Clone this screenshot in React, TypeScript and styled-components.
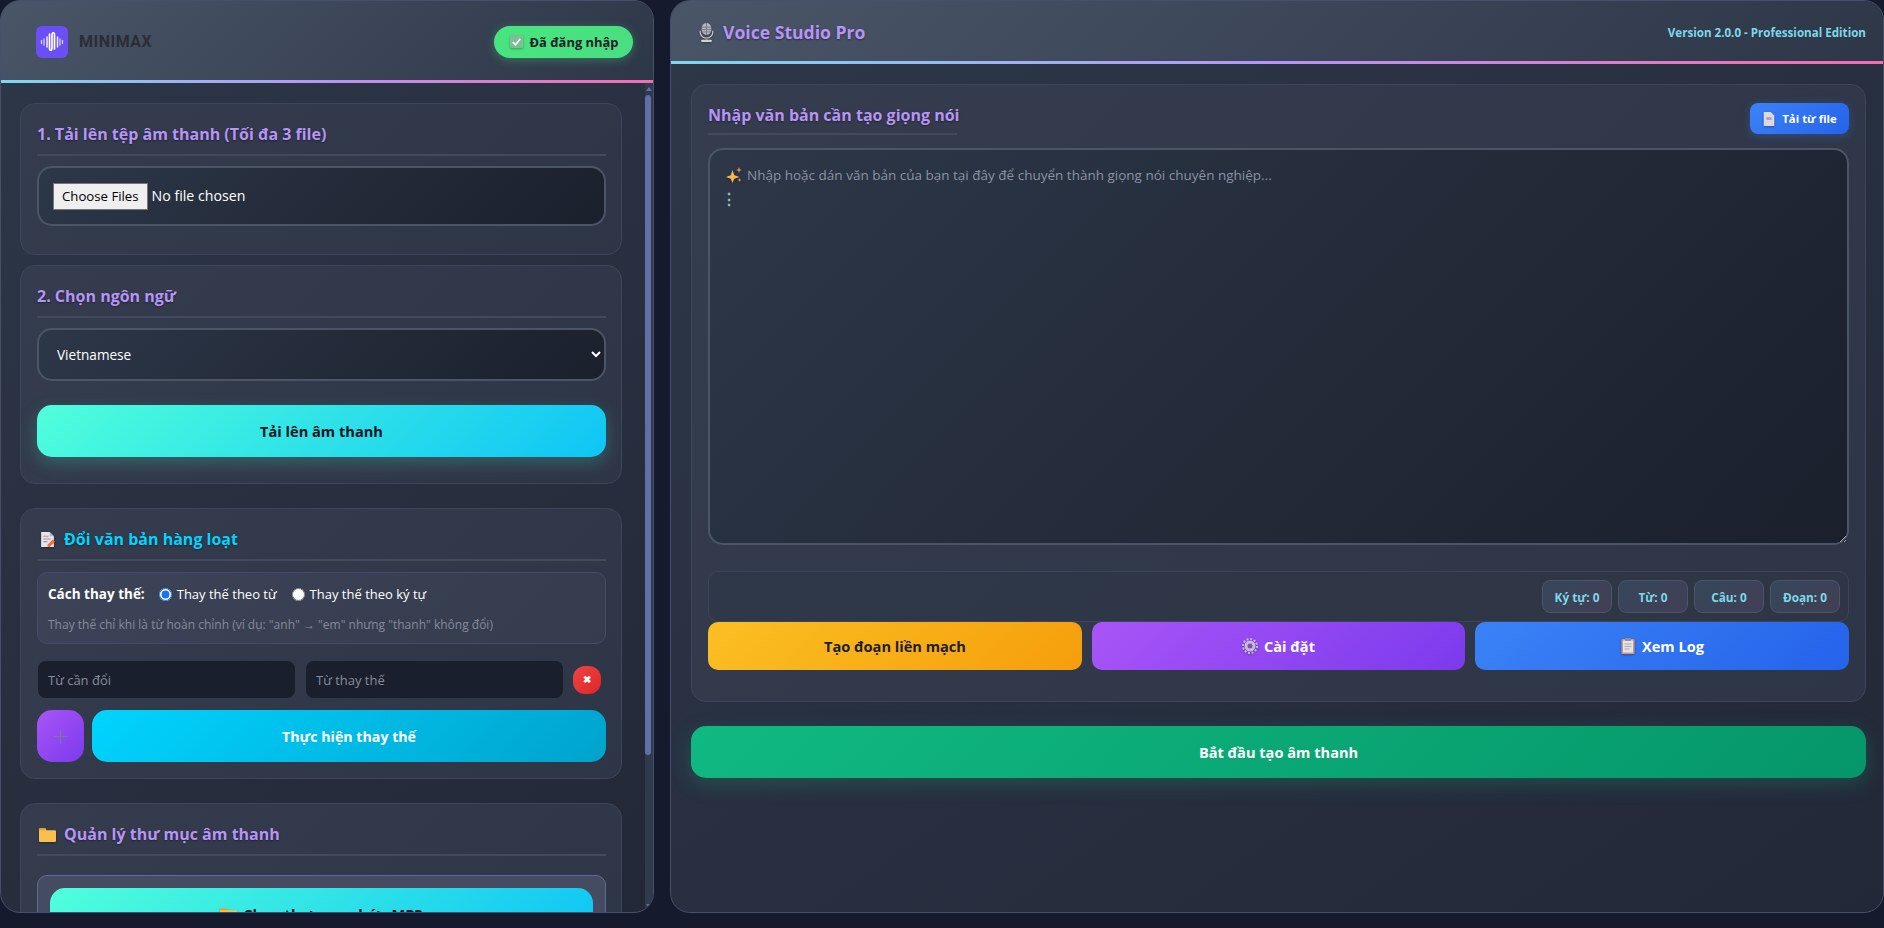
import React from "react";
import styled, { createGlobalStyle, css } from "styled-components";

const Global = createGlobalStyle`
  * { box-sizing: border-box; }
  html, body { margin: 0; height: 100%; overflow: hidden; }
  body { background: #151a2c; font-family: "Open Sans", "Noto Sans", sans-serif; color: #fff; }
`;

const Page = styled.div`
  display: grid;
  grid-template-columns: 654px 1214px;
  column-gap: 16px;
  height: 913px;
`;

const Panel = styled.section`
  display: flex;
  flex-direction: column;
  min-height: 0;
  overflow: hidden;
  border-radius: 20px;
  border: 1px solid #46506a;
  background: linear-gradient(145deg, #2d3748, #232838);
`;

const Header = styled.header<{ $h: number; $pl: number; $pr: number }>`
  flex: none;
  height: ${(p) => p.$h}px;
  padding: 2px ${(p) => p.$pr}px 0 ${(p) => p.$pl}px;
  display: flex;
  align-items: center;
  justify-content: space-between;
  background: linear-gradient(135deg, #4a5568, #2d3748);
  border-bottom: 3px solid;
  border-image: linear-gradient(90deg, #7dd8ef, #b794f6, #f56cb0) 1;
`;

const Brand = styled.div`
  display: flex;
  align-items: center;
  gap: 11px;
`;

const BrandName = styled.span`
  font: 700 16px "Roboto", sans-serif;
  color: #2a2d33;
  letter-spacing: 0.5px;
`;

const LoginBadge = styled.div`
  height: 32px;
  width: 139px;
  border-radius: 16px;
  display: flex;
  align-items: center;
  justify-content: center;
  gap: 6px;
  font-size: 12.9px;
  font-weight: 700;
  color: #1a202c;
  background: linear-gradient(135deg, #48e57f, #4ade80);
  box-shadow: 0 2px 10px rgba(74, 222, 128, 0.35);
`;

const ScrollArea = styled.div`
  position: relative;
  flex: 1;
  min-height: 0;
  overflow: hidden;
  padding: 20px 31px 0 19px;
  display: flex;
  flex-direction: column;
`;

const Track = styled.div`
  position: absolute;
  right: 0;
  top: 0;
  bottom: 0;
  width: 8px;
  background: #313a4d;
  &::before,
  &::after {
    content: "";
    position: absolute;
    left: 1px;
    border-left: 3px solid transparent;
    border-right: 3px solid transparent;
  }
  &::before {
    top: 4px;
    border-bottom: 4px solid #5f6fa8;
  }
  &::after {
    bottom: 4px;
    border-top: 4px solid #5f6fa8;
  }
`;

const Thumb = styled.div`
  position: absolute;
  left: 0;
  right: 2px;
  top: 12px;
  height: 660px;
  border-radius: 3px;
  background: #5f6fa8;
`;

const Card = styled.div<{ $mb: number; $h: number }>`
  flex: none;
  height: ${(p) => p.$h}px;
  margin-bottom: ${(p) => p.$mb}px;
  padding: 0 15px 0 16px;
  border: 1px solid #3d465e;
  border-radius: 15px;
  background: linear-gradient(135deg, #343c4d, #2e3546);
`;

const CardTitle = styled.h3<{ $cyan?: boolean }>`
  margin: 0 0 10px;
  height: 52px;
  padding-top: 10px;
  display: flex;
  align-items: center;
  gap: 8px;
  border-bottom: 2px solid #434a5d;
  font-size: 16px;
  font-weight: 700;
  color: ${(p) => (p.$cyan ? "#00d4ff" : "#b794f6")};
  text-shadow: 0 1px 2px rgba(0, 0, 0, 0.4);
  & > svg {
    margin-left: 2px;
  }
`;

const fieldBox = css`
  display: block;
  width: 100%;
  border: 2px solid #4a5568;
  border-radius: 15px;
  color: #fff;
  background: linear-gradient(135deg, #2d3748, #1a202c);
  font-family: "Open Sans", sans-serif;
  font-size: 13.6px;
`;

const FileInput = styled.input`
  ${fieldBox}
  height: 60px;
  padding: 0 14px;
  line-height: 56px;
  font-size: 14.2px;
  &::file-selector-button {
    font: 13.2px "Open Sans", sans-serif;
    height: 27px;
    padding: 0 8px;
    margin-right: 4px;
    background: #efefef;
    border: 1px solid #767676;
    border-radius: 0;
    color: #000;
  }
`;

const Select = styled.select`
  ${fieldBox}
  height: 53px;
  padding: 0 14px;
`;

const GradientButton = styled.button<{ $bg: string; $fg?: string; $h?: number; $glow?: string; $r?: number; $fs?: number }>`
  height: ${(p) => p.$h ?? 52}px;
  border: 0;
  border-radius: ${(p) => p.$r ?? 15}px;
  background: ${(p) => p.$bg};
  color: ${(p) => p.$fg ?? "#fff"};
  font-family: "Open Sans", sans-serif;
  font-weight: 700;
  font-size: ${(p) => p.$fs ?? 14.6}px;
  display: flex;
  align-items: center;
  justify-content: center;
  gap: 6px;
  box-shadow: ${(p) => p.$glow ?? "none"};
`;

const cyanBg = "linear-gradient(135deg, #4fffdb, #0fc5f5)";

const WideButton = styled(GradientButton)`
  width: 100%;
`;

const UploadButton = styled(WideButton)`
  margin-top: 24px;
`;

const Options = styled.div`
  height: 72px;
  margin-top: 11px;
  padding: 11px 10px;
  border: 1px solid #434d6a;
  border-radius: 10px;
  background: linear-gradient(135deg, #3c4356, #353c4e);
`;

const RadioRow = styled.div`
  display: flex;
  align-items: center;
  height: 20px;
  font-size: 13px;
`;

const RadioLead = styled.strong`
  margin-right: 14px;
  font-size: 13.5px;
`;

const RadioLabel = styled.label`
  display: flex;
  align-items: center;
  gap: 5px;
  margin-right: 15px;
`;

const Radio = styled.input`
  margin: 0;
  width: 13px;
  height: 13px;
  accent-color: #1a73f5;
`;

const Hint = styled.div`
  margin-top: 12px;
  font-size: 12px;
  color: #838b9c;
`;

const ReplaceRow = styled.div`
  display: flex;
  align-items: center;
  margin: 17px 0 12px 1px;
`;

const TextField = styled.input`
  width: 257px;
  height: 37px;
  margin-right: 11px;
  padding: 0 10px;
  border: 0;
  border-radius: 8px;
  background: #1a1f2e;
  color: #fff;
  font: 13px "Open Sans", sans-serif;
  &::placeholder { color: #868c9a; }
`;

const DeleteButton = styled.button`
  width: 28px;
  height: 28px;
  margin-left: -1px;
  border: 0;
  border-radius: 12px;
  background: linear-gradient(135deg, #ef4444, #dc2626);
  color: #fff;
  font-weight: 700;
  font-size: 10px;
  display: flex;
  align-items: center;
  justify-content: center;
  padding: 0;
`;

const ActionRow = styled.div`
  display: grid;
  grid-template-columns: 47px 1fr;
  gap: 8px;
`;

const PlusGlyph = styled.span`
  font-size: 30px;
  font-weight: 300;
  color: #7f74a8;
  line-height: 1;
`;

const FolderBox = styled.div`
  height: 72px;
  margin-top: 19px;
  padding: 12px 12px 0;
  border: 1px solid #5e6b95;
  border-radius: 10px;
  background: #454b60;
`;

const Main = styled.div`
  flex: 1;
  padding: 20px 17px 0 20px;
  display: flex;
  flex-direction: column;
`;

const StudioTitle = styled.h1`
  margin: 0;
  display: flex;
  align-items: center;
  gap: 7px;
  font-size: 17.6px;
  font-weight: 700;
  color: #b794f6;
  text-shadow: 0 1px 2px rgba(0, 0, 0, 0.4);
`;

const Version = styled.span`
  font-size: 11.6px;
  font-weight: 700;
  color: #7dd8e8;
`;

const EditorCard = styled.div`
  flex: none;
  height: 618px;
  padding: 0 16px;
  border: 1px solid #3d465e;
  border-radius: 15px;
  background: linear-gradient(135deg, #343c4d, #2e3546);
`;

const EditorTop = styled.div`
  height: 63px;
  display: flex;
  justify-content: space-between;
  align-items: flex-start;
`;

const EditorTitle = styled.h3`
  margin: 18px 0 0;
  width: 249px;
  height: 32px;
  border-bottom: 2px solid #434a5d;
  font-size: 16px;
  line-height: 24px;
  font-weight: 700;
  white-space: nowrap;
  color: #b794f6;
  text-shadow: 0 1px 2px rgba(0, 0, 0, 0.4);
`;

const LoadButton = styled(GradientButton)`
  margin-top: 18px;
  width: 99px;
`;

const EditorBox = styled.div`
  position: relative;
  height: 397px;
`;

const TextArea = styled.textarea`
  ${fieldBox}
  height: 100%;
`;

const PlaceholderOverlay = styled.div`
  position: absolute;
  left: 18px;
  top: 15px;
  pointer-events: none;
  font-size: 13.5px;
  line-height: 24px;
  color: #8a92a3;
`;

const PlaceholderLine = styled.div`
  display: flex;
  align-items: center;
  gap: 5px;
`;

const Dots = styled.div`
  font-size: 16px;
  font-weight: 700;
  color: #a4acba;
  margin-left: -5px;
`;

const StatsBar = styled.div`
  margin-top: 26px;
  height: 51px;
  display: flex;
  justify-content: flex-end;
  align-items: flex-start;
  gap: 6px;
  padding: 8px 8px 0;
  border: 1px solid #3a445c;
  border-radius: 10px;
  background: linear-gradient(135deg, #2e3848, #2f3545);
`;

const Chip = styled.div`
  width: 70px;
  height: 33px;
  display: flex;
  align-items: center;
  justify-content: center;
  border: 1px solid #45566c;
  border-radius: 8px;
  background: linear-gradient(135deg, #374659, #413f55);
  color: #7dd8e8;
  font-size: 11.8px;
  font-weight: 700;
`;

const TriRow = styled.div`
  display: grid;
  grid-template-columns: 374px 373px 374px;
  gap: 10px;
`;

const StartButton = styled(WideButton)`
  margin-top: 24px;
  flex: none;
`;

const Emoji = styled.svg<{ $s?: number }>`
  flex: none;
  width: ${(p) => p.$s ?? 16}px;
  height: ${(p) => p.$s ?? 16}px;
  filter: drop-shadow(0 1px 1px rgba(0, 0, 0, 0.3));
`;

const Logo = () => (
  <svg width="32" height="32" viewBox="0 0 32 32">
    <rect width="32" height="32" rx="6" fill="#6a4ff6" />
    <g stroke="#fff" strokeLinecap="round" fill="none">
      <path d="M5.500 14.500v3M8 13v6" strokeWidth="1.300" opacity=".75" />
      <path d="M11 11v10" strokeWidth="1.500" opacity=".9" />
      <path d="M13.500 8v14c0 3 2.500 3 2.500 0V9c0-3 2.500-3 2.500 0v14" strokeWidth="1.700" />
      <path d="M21.500 11v10" strokeWidth="1.500" opacity=".9" />
      <path d="M24 13v6M26.500 14.500v3" strokeWidth="1.300" opacity=".75" />
    </g>
  </svg>
);
const CheckEmoji = () => (
  <Emoji $s={15} viewBox="0 0 16 16">
    <rect x="1" y="1" width="14" height="14" rx="2" fill="#7fbd96" />
    <path d="M4 8.500l3 3 5-6.500" stroke="#f4fff8" strokeWidth="1.700" fill="none" />
  </Emoji>
);
const MemoEmoji = () => (
  <Emoji $s={17} viewBox="0 0 16 16">
    <path d="M2 1h8l4 4v10H2z" fill="#e8e4ea" />
    <path d="M10 1l4 4h-4z" fill="#b9b4c0" />
    <path d="M4 5h5M4 7.500h7M4 10h4" stroke="#9c98a6" />
    <path d="M8 13l5-5 2 2-5 5H8z" fill="#f0703a" />
  </Emoji>
);
const FolderEmoji = () => (
  <Emoji $s={17} viewBox="0 0 16 16">
    <path d="M0 3a1 1 0 011-1h5l1 2h8a1 1 0 011 1v9a1 1 0 01-1 1H1a1 1 0 01-1-1z" fill="#f9c04f" />
    <path d="M0 3a1 1 0 011-1h5l1 2H0z" fill="#e2a32f" />
  </Emoji>
);
const MicEmoji = () => (
  <Emoji $s={19} viewBox="0 0 16 16">
    <rect x="4" y="0" width="8" height="10" rx="4" fill="#b2b6bd" />
    <path d="M4 3.500h8M4 5.500h8M4 7.500h8M8 0v10" stroke="#767c88" strokeWidth=".8" />
    <path d="M2.700 6.500v1a5.300 5.300 0 0010.600 0v-1" stroke="#c4c7cd" fill="none" />
    <rect x="7" y="12.500" width="2" height="1.500" fill="#8d939c" />
    <rect x="3.500" y="14" width="9" height="2" rx=".8" fill="#d0d2d8" />
  </Emoji>
);
const DocEmoji = () => (
  <Emoji $s={14} viewBox="0 0 16 16">
    <path d="M2 0h8l4 4v12H2z" fill="#ded8e6" />
    <path d="M5 6h6v3H5z" fill="#a9a2b4" />
  </Emoji>
);
const GearEmoji = () => (
  <Emoji viewBox="0 0 16 16">
    <circle cx="8" cy="8" r="5.500" fill="#c5bcd4" />
    <circle cx="8" cy="8" r="7" fill="none" stroke="#c5bcd4" strokeWidth="2" strokeDasharray="2 1.660" />
    <circle cx="8" cy="8" r="2.500" fill="#7c4fc4" />
  </Emoji>
);
const ClipboardEmoji = () => (
  <Emoji viewBox="0 0 16 16">
    <rect x="1.500" y="1" width="13" height="15" rx="1" fill="#d99a6c" />
    <rect x="3" y="2.500" width="10" height="12" fill="#e4e2ea" />
    <rect x="5" y="0" width="6" height="3" rx="1" fill="#8b8f99" />
    <path d="M4.500 6h7M4.500 8.500h7M4.500 11h5" stroke="#a6a8b4" />
  </Emoji>
);
const SparkleEmoji = () => (
  <Emoji $s={16} viewBox="0 0 16 16">
    <path d="M6.500 3l1.800 5.200L13.500 10l-5.200 1.800L6.500 16l-1.800-4.200L0 10l4.700-1.800z" fill="#f7b84f" />
    <path d="M13 0l.8 2.200L16 3l-2.200.8L13 6l-.8-2.200L10 3l2.200-.8z" fill="#f08a4b" />
    <path d="M13.500 11l.5 1.500 1.500.5-1.500.5-.5 1.500-.5-1.500-1.500-.5 1.500-.5z" fill="#f6a04d" />
  </Emoji>
);

export default function App() {
  return (
    <Page>
      <Global />
      <Panel>
        <Header $h={82} $pl={35} $pr={20}>
          <Brand>
            <Logo />
            <BrandName>MINIMAX</BrandName>
          </Brand>
          <LoginBadge><CheckEmoji />Đã đăng nhập</LoginBadge>
        </Header>
        <ScrollArea>
          <Track><Thumb /></Track>
          <Card $h={152} $mb={10}>
            <CardTitle>1. Tải lên tệp âm thanh (Tối đa 3 file)</CardTitle>
            <FileInput type="file" multiple />
          </Card>
          <Card $h={219} $mb={24}>
            <CardTitle>2. Chọn ngôn ngữ</CardTitle>
            <Select defaultValue="vi"><option value="vi">Vietnamese</option></Select>
            <UploadButton $bg={cyanBg} $fg="#10131d" $glow="0 6px 18px rgba(79,255,219,.22)">Tải lên âm thanh</UploadButton>
          </Card>
          <Card $h={271} $mb={24}>
            <CardTitle $cyan><MemoEmoji />Đổi văn bản hàng loạt</CardTitle>
            <Options>
              <RadioRow>
                <RadioLead>Cách thay thế:</RadioLead>
                <RadioLabel><Radio type="radio" name="m" defaultChecked />Thay thế theo từ</RadioLabel>
                <RadioLabel><Radio type="radio" name="m" />Thay thế theo ký tự</RadioLabel>
              </RadioRow>
              <Hint>Thay thế chỉ khi là từ hoàn chỉnh (ví dụ: "anh" → "em" nhưng "thanh" không đổi)</Hint>
            </Options>
            <ReplaceRow>
              <TextField placeholder="Từ cần đổi" />
              <TextField placeholder="Từ thay thế" />
              <DeleteButton>✖</DeleteButton>
            </ReplaceRow>
            <ActionRow>
              <GradientButton $bg="linear-gradient(135deg,#a855f7,#7c3aed)"><PlusGlyph>+</PlusGlyph></GradientButton>
              <GradientButton $fs={14.2} $bg="linear-gradient(135deg,#00d4ff,#00a3cc)">Thực hiện thay thế</GradientButton>
            </ActionRow>
          </Card>
          <Card $h={200} $mb={0}>
            <CardTitle><FolderEmoji />Quản lý thư mục âm thanh</CardTitle>
            <FolderBox>
              <WideButton $bg={cyanBg} $fg="#10131d"><FolderEmoji />Chọn thư mục chứa MP3</WideButton>
            </FolderBox>
          </Card>
        </ScrollArea>
      </Panel>
      <Panel>
        <Header $h={63} $pl={26} $pr={17}>
          <StudioTitle><MicEmoji />Voice Studio Pro</StudioTitle>
          <Version>Version 2.0.0 - Professional Edition</Version>
        </Header>
        <Main>
          <EditorCard>
            <EditorTop>
              <EditorTitle>Nhập văn bản cần tạo giọng nói</EditorTitle>
              <LoadButton $h={31} $r={8} $fs={11.4} $bg="linear-gradient(135deg,#3b82f6,#2563eb)" $glow="0 2px 10px rgba(59,130,246,.3)"><DocEmoji />Tải từ file</LoadButton>
            </EditorTop>
            <EditorBox>
              <TextArea />
              <PlaceholderOverlay>
                <PlaceholderLine><SparkleEmoji />Nhập hoặc dán văn bản của bạn tại đây để chuyển thành giọng nói chuyên nghiệp...</PlaceholderLine>
                <Dots>⋮</Dots>
              </PlaceholderOverlay>
            </EditorBox>
            <StatsBar>
              <Chip>Ký tự: 0</Chip>
              <Chip>Từ: 0</Chip>
              <Chip>Câu: 0</Chip>
              <Chip>Đoạn: 0</Chip>
            </StatsBar>
            <TriRow>
              <GradientButton $h={48} $r={10} $fg="#1a202c" $bg="linear-gradient(135deg,#fbbf24,#f59e0b)">Tạo đoạn liền mạch</GradientButton>
              <GradientButton $h={48} $r={10} $bg="linear-gradient(135deg,#a855f7,#7c3aed)"><GearEmoji />Cài đặt</GradientButton>
              <GradientButton $h={48} $r={10} $bg="linear-gradient(135deg,#3b82f6,#2563eb)"><ClipboardEmoji />Xem Log</GradientButton>
            </TriRow>
          </EditorCard>
          <StartButton $bg="linear-gradient(135deg,#10b981,#059669)" $glow="0 6px 20px rgba(16,185,129,.25)">Bắt đầu tạo âm thanh</StartButton>
        </Main>
      </Panel>
    </Page>
  );
}
